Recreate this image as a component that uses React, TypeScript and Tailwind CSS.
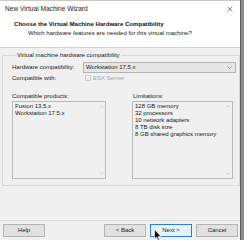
import React from "react";

const ScrollArrows: React.FC = () => (
  <div className="absolute right-0 top-0 bottom-0 w-[8px] flex flex-col justify-between items-center py-[3px]">
    <svg width="5" height="3" viewBox="0 0 5 3">
      <path d="M0.5 2.5 L2.5 0.5 L4.5 2.5" fill="none" stroke="#c4c4c4" strokeWidth="0.8" />
    </svg>
    <svg width="5" height="3" viewBox="0 0 5 3">
      <path d="M0.5 0.5 L2.5 2.5 L4.5 0.5" fill="none" stroke="#c4c4c4" strokeWidth="0.8" />
    </svg>
  </div>
);

const ListBox: React.FC<{ items: string[]; width: string }> = ({ items, width }) => (
  <div
    className={`relative ${width} h-[78px] border border-[#b9b9b9] bg-[#f0f0f0] pl-[2px] pt-[1px]`}
  >
    {items.map((item) => (
      <div key={item} className="h-[7px] leading-[7px] text-[6px] text-[#1a1a1a]">
        {item}
      </div>
    ))}
    <ScrollArrows />
  </div>
);

const WizardButton: React.FC<{ label: string; primary?: boolean }> = ({ label, primary }) => (
  <div
    className={`w-[42px] h-[13px] flex items-center justify-center text-[6px] text-[#1a1a1a] border ${
      primary ? "border-[#2a7fd4] bg-[#e5f1fb]" : "border-[#b4b4b4] bg-[#e1e1e1]"
    }`}
  >
    {label}
  </div>
);

export default function App() {
  return (
    <div className="relative w-[244px] h-[240px] bg-[#8c8c8c] overflow-hidden font-['Liberation_Sans',Arial,sans-serif]">
      <div className="w-[241px] h-[240px] bg-[#f0f0f0] flex flex-col border-r border-[#5c5c5c]">
        {/* Title bar */}
        <div className="h-[17px] bg-white flex items-center justify-between pl-[5px] pr-[7px] border-t border-[#c8c8c8]">
          <span className="text-[6.6px] text-[#222]">New Virtual Machine Wizard</span>
          <svg width="6" height="6" viewBox="0 0 6 6">
            <path d="M0.5 0.5 L5.5 5.5 M5.5 0.5 L0.5 5.5" stroke="#444" strokeWidth="0.6" />
          </svg>
        </div>

        {/* Header */}
        <div className="h-[31px] bg-white border-b border-[#cfcfcf] pt-[3px]">
          <div className="pl-[14px] h-[8px] leading-[8px] text-[6.1px] font-bold text-[#111]">
            Choose the Virtual Machine Hardware Compatibility
          </div>
          <div className="pl-[28px] mt-[1px] h-[8px] leading-[8px] text-[6px] text-[#222]">
            Which hardware features are needed for this virtual machine?
          </div>
        </div>

        {/* Body */}
        <div className="pt-[3px] pl-[2px] pr-[1px]">
          <fieldset className="border border-[#d6d6d6] pl-[9px] pr-[3px] pb-[6px]">
            <legend className="ml-[4px] px-[1px] h-[8px] leading-[8px] text-[6px] text-[#1a1a1a]">
              Virtual machine hardware compatibility
            </legend>
            <div className="mt-[3px] h-[11px] flex items-center">
              <span className="w-[71px] text-[6px] text-[#1a1a1a]">Hardware compatibility:</span>
              <div className="w-[153px] h-[11px] border border-[#b4b4b4] bg-[#e6e6e6] flex items-center justify-between pl-[2px] pr-[3px]">
                <span className="text-[6px] text-[#1a1a1a]">Workstation 17.5.x</span>
                <svg width="5" height="3" viewBox="0 0 5 3">
                  <path d="M0.5 0.5 L2.5 2.5 L4.5 0.5" fill="none" stroke="#777" strokeWidth="0.7" />
                </svg>
              </div>
            </div>
            <div className="mt-[1px] h-[8px] flex items-center">
              <span className="w-[71px] text-[6px] text-[#1a1a1a]">Compatible with:</span>
              <div className="ml-[2px] w-[6px] h-[6px] border border-[#cdcdcd] bg-[#f4f4f4] flex items-center justify-center">
                <svg width="4" height="4" viewBox="0 0 4 4">
                  <path d="M0.5 2 L1.6 3.1 L3.5 0.8" fill="none" stroke="#c8c8c8" strokeWidth="0.6" />
                </svg>
              </div>
              <span className="ml-[2px] text-[6px] text-[#a3a3a3]">ESX Server</span>
            </div>
            <div className="mt-[10px] flex">
              <div className="flex flex-col">
                <div className="h-[8px] leading-[8px] text-[6px] text-[#1a1a1a]">Compatible products:</div>
                <div className="mt-[1px]">
                  <ListBox width="w-[94px]" items={["Fusion 13.5.x", "Workstation 17.5.x"]} />
                </div>
              </div>
              <div className="ml-[26px] flex flex-col">
                <div className="pl-[1px] h-[8px] leading-[8px] text-[6px] text-[#1a1a1a]">Limitations:</div>
                <div className="mt-[1px]">
                  <ListBox
                    width="w-[101px]"
                    items={[
                      "128 GB memory",
                      "32 processors",
                      "10 network adapters",
                      "8 TB disk size",
                      "8 GB shared graphics memory",
                    ]}
                  />
                </div>
              </div>
            </div>
          </fieldset>
        </div>

        <div className="flex-1" />

        {/* Footer */}
        <div className="border-t border-[#dcdcdc] pt-[3px] pb-[3px] pl-[3px] pr-[2px] flex items-center">
          <WizardButton label="Help" />
          <div className="flex-1" />
          <div className="flex gap-[4px]">
            <WizardButton label="< Back" />
            <WizardButton label="Next >" primary />
            <WizardButton label="Cancel" />
          </div>
        </div>
      </div>

      {/* Mouse pointer */}
      <svg className="absolute left-[154px] top-[229px]" width="8" height="12" viewBox="0 0 8 12">
        <path d="M0.5 0.5 L0.5 10 L2.6 8 L4 11.3 L5.4 10.7 L4 7.6 L7 7.6 Z" fill="#000" stroke="#fff" strokeWidth="0.7" />
      </svg>
    </div>
  );
}
